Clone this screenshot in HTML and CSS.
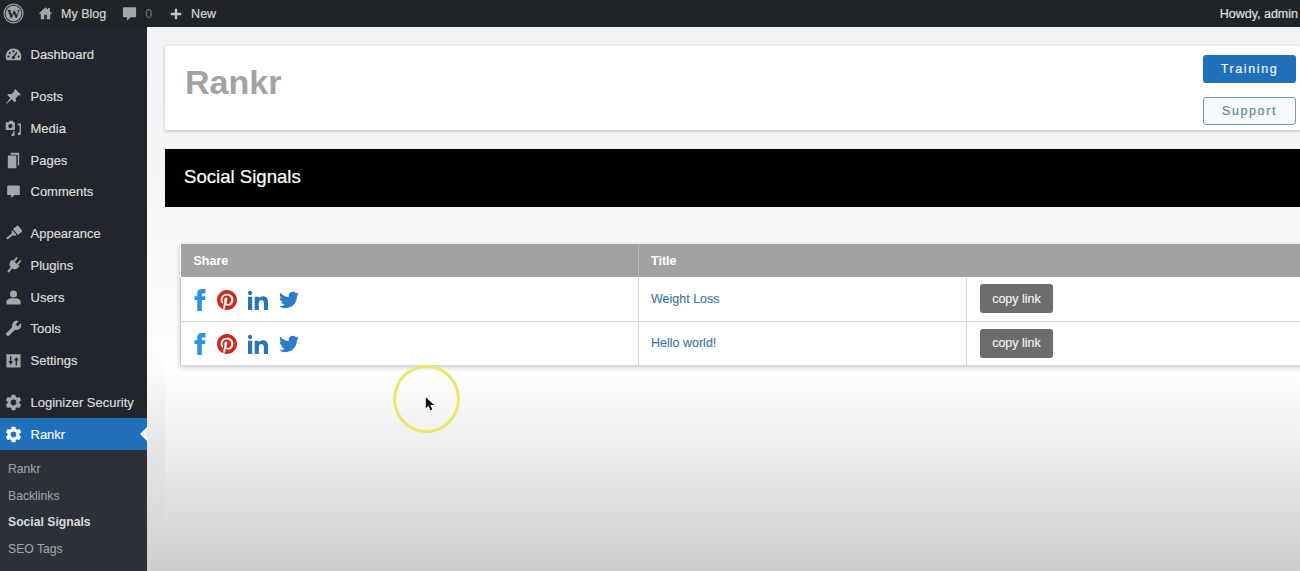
FILE: index.html
```html
<!DOCTYPE html>
<html lang="en">
<head>
<meta charset="utf-8">
<title>Rankr - Social Signals</title>
<link rel="stylesheet" href="styles.css">
</head>
<body>
<svg class="defs" aria-hidden="true">
  <symbol id="i-gear" viewBox="0 0 24 24"><path d="M19.14 12.94c.04-.3.06-.61.06-.94 0-.32-.02-.64-.07-.94l2.03-1.58a.49.49 0 00.12-.61l-1.92-3.32a.488.488 0 00-.59-.22l-2.39.96c-.5-.38-1.03-.7-1.62-.94l-.36-2.54a.484.484 0 00-.48-.41h-3.84c-.24 0-.43.17-.47.41l-.36 2.54c-.59.24-1.13.57-1.62.94l-2.39-.96c-.22-.08-.47 0-.59.22L2.74 8.87c-.12.21-.08.47.12.61l2.03 1.58c-.05.3-.09.63-.09.94s.02.64.07.94l-2.03 1.58a.49.49 0 00-.12.61l1.92 3.32c.12.22.37.29.59.22l2.39-.96c.5.38 1.03.7 1.62.94l.36 2.54c.05.24.24.41.48.41h3.84c.24 0 .44-.17.47-.41l.36-2.54c.59-.24 1.13-.56 1.62-.94l2.39.96c.22.08.47 0 .59-.22l1.92-3.32c.12-.22.07-.47-.12-.61l-2.01-1.58zM12 15.6c-1.98 0-3.6-1.62-3.6-3.6s1.62-3.6 3.6-3.6 3.6 1.62 3.6 3.6-1.62 3.6-3.6 3.6z"/></symbol>
  <symbol id="i-comment" viewBox="0 0 24 24"><path d="M3 2h18a1.5 1.5 0 011.5 1.5v13A1.5 1.5 0 0121 18h-7l-6 5v-5H3a1.5 1.5 0 01-1.5-1.5v-13A1.5 1.5 0 013 2z"/></symbol>
  <symbol id="i-fb" viewBox="0 0 24 24"><path d="M9 8H6v4h3v12h5V12h3.642L18 8h-4V6.333C14 5.378 14.192 5 15.115 5H18V0h-3.808C10.596 0 9 1.583 9 4.615V8z"/></symbol>
  <symbol id="i-pin" viewBox="0 0 24 24"><circle cx="12" cy="12" r="11.6" fill="#fff"/><path d="M12 0C5.373 0 0 5.372 0 12c0 5.084 3.163 9.426 7.627 11.174-.105-.949-.2-2.405.042-3.441.218-.937 1.407-5.965 1.407-5.965s-.359-.719-.359-1.782c0-1.668.967-2.914 2.171-2.914 1.023 0 1.518.769 1.518 1.69 0 1.029-.655 2.568-.994 3.995-.283 1.194.599 2.169 1.777 2.169 2.133 0 3.772-2.249 3.772-5.495 0-2.873-2.064-4.882-5.012-4.882-3.414 0-5.418 2.561-5.418 5.207 0 1.031.397 2.138.893 2.738a.36.36 0 01.083.345l-.333 1.36c-.053.22-.174.267-.402.161-1.499-.698-2.436-2.889-2.436-4.649 0-3.785 2.75-7.262 7.929-7.262 4.163 0 7.398 2.967 7.398 6.931 0 4.136-2.607 7.464-6.227 7.464-1.216 0-2.359-.631-2.75-1.378l-.748 2.853c-.271 1.043-1.002 2.35-1.492 3.146C9.57 23.812 10.763 24 12 24c6.627 0 12-5.373 12-12S18.627 0 12 0z"/></symbol>
  <symbol id="i-in" viewBox="0 0 24 24"><path d="M4.98 3.5C4.98 4.881 3.87 6 2.5 6S.02 4.881.02 3.5C.02 2.12 1.13 1 2.5 1s2.48 1.12 2.48 2.5zM5 8H0v16h5V8zm7.982 0H8.014v16h4.969v-8.399c0-4.67 6.029-5.052 6.029 0V24H24V13.869c0-7.88-8.922-7.593-11.018-3.714V8z"/></symbol>
  <symbol id="i-tw" viewBox="0 0 24 24"><path d="M23.953 4.57a10 10 0 01-2.825.775 4.958 4.958 0 002.163-2.723c-.951.555-2.005.959-3.127 1.184a4.92 4.92 0 00-8.384 4.482C7.69 8.095 4.067 6.13 1.64 3.162a4.822 4.822 0 00-.666 2.475c0 1.71.87 3.213 2.188 4.096a4.904 4.904 0 01-2.228-.616v.06a4.923 4.923 0 003.946 4.827 4.996 4.996 0 01-2.212.085 4.936 4.936 0 004.604 3.417 9.867 9.867 0 01-6.102 2.105c-.39 0-.779-.023-1.17-.067a13.995 13.995 0 007.557 2.209c9.053 0 13.998-7.496 13.998-13.985 0-.21 0-.42-.015-.63A9.935 9.935 0 0024 4.59z"/></symbol>
</svg>

<header class="adminbar">
  <svg class="bar-wp" viewBox="0 0 24 24"><circle cx="12" cy="12" r="10.8" fill="none" stroke="#a0a5aa" stroke-width="1.4"/><circle cx="12" cy="12" r="9" fill="#a0a5aa"/><text x="12" y="17" text-anchor="middle" class="wp-w">W</text></svg>
  <div class="bar-item bar-blog">
    <svg class="bar-icon" viewBox="0 0 24 24"><path d="M10 21v-7h4v7h5.500v-8.500H23L19 8.700V3h-3v2.800L12 2 1 12.500h3.500V21z"/></svg>
    <span>My Blog</span>
  </div>
  <div class="bar-item bar-comments">
    <svg class="bar-icon" viewBox="0 0 24 24"><use href="#i-comment"/></svg>
    <span class="bar-count">0</span>
  </div>
  <div class="bar-item bar-new">
    <svg class="bar-icon bar-plus" viewBox="0 0 24 24"><path d="M10 3h4v7h7v4h-7v7h-4v-7H3v-4h7z"/></svg>
    <span>New</span>
  </div>
  <div class="bar-howdy">Howdy, admin</div>
</header>

<div class="shell">
  <nav class="sidebar">
    <ul class="menu-group">
      <li class="menu-item"><svg class="menu-icon" viewBox="0 0 24 24"><path d="M12 3.500C5.900 3.500 1 8.400 1 14.500c0 2 .5 3.900 1.200 5.500h19.600c.7-1.600 1.200-3.500 1.200-5.500C23 8.400 18.100 3.500 12 3.500z"/><g class="gauge-marks"><circle cx="12" cy="7.500" r="1.500"/><circle cx="6.800" cy="9.800" r="1.500"/><circle cx="4.800" cy="14.800" r="1.500"/><circle cx="19.200" cy="14.800" r="1.500"/><path d="M16 8.500l1.500 1-3.800 5.600a2.200 2.200 0 11-1.800-1z"/></g></svg><span>Dashboard</span></li>
    </ul>
    <ul class="menu-group">
      <li class="menu-item"><svg class="menu-icon" viewBox="0 0 24 24"><path d="M14.500 1.500l8 8-1.800 1.200-1.200-.7-4.500 4.500.5 4-1.800 1.800-4.200-4.300L2 22.500l-.5-.5 6-7.800-4.300-4.200 1.800-1.800 4 .5 4.500-4.500-.7-1.200z"/></svg><span>Posts</span></li>
      <li class="menu-item"><svg class="menu-icon" viewBox="0 0 24 24"><path fill-rule="evenodd" d="M1 3h4l1-2h5l1 2h2v11H1zm6.500 8.500a3 3 0 100-6 3 3 0 000 6z"/><path d="M18 5h4.500v14.500a2.300 2 0 11-2-2V7.500H18zM11 16h2.500v5a2.300 2 0 11-2-2z"/></svg><span>Media</span></li>
      <li class="menu-item"><svg class="menu-icon" viewBox="0 0 24 24"><path d="M8 1h12v18h-2V4H8zM4 5h12v18H4z"/></svg><span>Pages</span></li>
      <li class="menu-item"><svg class="menu-icon small" viewBox="0 0 24 24"><use href="#i-comment"/></svg><span>Comments</span></li>
    </ul>
    <ul class="menu-group">
      <li class="menu-item"><svg class="menu-icon" viewBox="0 0 24 24"><g transform="rotate(52 12 12)"><path d="M6.500 0h11v8.500h-11zM8 10h8v3h-2l-.5 2.500v8.500h-3v-8.500L10 13H8z"/></g></svg><span>Appearance</span></li>
      <li class="menu-item"><svg class="menu-icon" viewBox="0 0 24 24"><g transform="rotate(40 12 12)"><path d="M7.500 0h2.500v7h4V0h2.500v7H19v3c0 4-2.500 6-5.500 6.500v7.500h-3v-7.500C7.500 16 5 14 5 10V7h2.500z"/></g></svg><span>Plugins</span></li>
      <li class="menu-item"><svg class="menu-icon" viewBox="0 0 24 24"><circle cx="12" cy="7" r="5"/><path d="M2 22v-4c0-3 4-5 7-5h6c3 0 7 2 7 5v4z"/></svg><span>Users</span></li>
      <li class="menu-item"><svg class="menu-icon flip" viewBox="0 0 24 24"><path d="M22.700 19l-9.100-9.100c.9-2.300.4-5-1.500-6.900-2-2-5-2.400-7.400-1.300L9 6 6 9 1.600 4.700C.4 7.100.9 10.100 2.900 12.100c1.900 1.900 4.600 2.400 6.900 1.500l9.100 9.100c.4.400 1 .4 1.400 0l2.300-2.300c.5-.4.5-1.100.1-1.400z"/></svg><span>Tools</span></li>
      <li class="menu-item"><svg class="menu-icon" viewBox="0 0 24 24"><path fill-rule="evenodd" d="M2 3h20v19H2zM7 6v7H4.500L8 18l3.500-5H9V6zm8 13v-7h-2.500L16 7l3.500 5H17v7z"/></svg><span>Settings</span></li>
    </ul>
    <ul class="menu-group menu-group-last">
      <li class="menu-item"><svg class="menu-icon large" viewBox="0 0 24 24"><use href="#i-gear"/></svg><span>Loginizer Security</span></li>
      <li class="menu-item current"><svg class="menu-icon large" viewBox="0 0 24 24"><use href="#i-gear"/></svg><span>Rankr</span></li>
    </ul>
    <ul class="submenu">
      <li>Rankr</li>
      <li>Backlinks</li>
      <li class="sub-current">Social Signals</li>
      <li>SEO Tags</li>
    </ul>
  </nav>

  <main class="content">
    <section class="brand-card">
      <h1 class="brand-title">Rankr</h1>
      <div class="brand-actions">
        <a class="btn btn-primary">Training</a>
        <a class="btn btn-outline">Support</a>
      </div>
    </section>

    <div class="section-bar">Social Signals</div>

    <table class="signals">
      <colgroup><col class="col-share"><col class="col-title"><col></colgroup>
      <thead>
        <tr><th>Share</th><th colspan="2">Title</th></tr>
      </thead>
      <tbody>
        <tr>
          <td>
            <div class="shares">
              <svg class="s-icon s-fb" viewBox="0 0 24 24"><use href="#i-fb"/></svg>
              <svg class="s-icon s-pin" viewBox="0 0 24 24"><use href="#i-pin"/></svg>
              <svg class="s-icon s-in" viewBox="0 0 24 24"><use href="#i-in"/></svg>
              <svg class="s-icon s-tw" viewBox="0 0 24 24"><use href="#i-tw"/></svg>
            </div>
          </td>
          <td><a class="post-link">Weight Loss</a></td>
          <td class="copy-cell"><button class="copy" type="button">copy link</button></td>
        </tr>
        <tr>
          <td>
            <div class="shares">
              <svg class="s-icon s-fb" viewBox="0 0 24 24"><use href="#i-fb"/></svg>
              <svg class="s-icon s-pin" viewBox="0 0 24 24"><use href="#i-pin"/></svg>
              <svg class="s-icon s-in" viewBox="0 0 24 24"><use href="#i-in"/></svg>
              <svg class="s-icon s-tw" viewBox="0 0 24 24"><use href="#i-tw"/></svg>
            </div>
          </td>
          <td><a class="post-link">Hello world!</a></td>
          <td class="copy-cell"><button class="copy" type="button">copy link</button></td>
        </tr>
      </tbody>
    </table>
  </main>
</div>

<div class="cursor-ring"></div>
<svg class="cursor-arrow" viewBox="0 0 12 18"><path d="M1 1v13l3.200-3 2.300 5.500 2.200-1-2.300-5.300H11z" fill="#111"/></svg>
</body>
</html>
```
FILE: styles.css
```css
* { box-sizing: border-box; }
html, body { margin: 0; padding: 0; }
body {
  width: 1300px;
  height: 571px;
  overflow: hidden;
  position: relative;
  font-family: "Liberation Sans", Arial, sans-serif;
  background: #fff;
}
.defs { display: none; }
ul { list-style: none; margin: 0; padding: 0; }

/* admin bar */
.adminbar {
  height: 27px;
  background: #202327;
  display: flex;
  align-items: center;
  padding-left: 3px;
  color: #d4d5d6;
  font-size: 12.500px;
  -webkit-text-stroke: 0.2px #d4d5d6;
}
.bar-wp { width: 21px; height: 21px; flex: none; margin-top: -1px; }
.wp-w { font-family: "Liberation Serif", serif; font-size: 15px; font-weight: 700; fill: #202327; stroke: none; }
.bar-item { display: flex; align-items: center; }
.bar-icon { width: 15px; height: 15px; fill: #a4a7aa; flex: none; stroke: none; }
.bar-plus { width: 14px; height: 14px; fill: #c4c6c8; }
.bar-blog { margin-left: 14px; gap: 8px; }
.bar-comments { margin-left: 16px; gap: 8px; }
.bar-count { color: #777a7d; -webkit-text-stroke: 0; }
.bar-new { margin-left: 17px; gap: 8px; }
.bar-howdy { margin-left: auto; color: #e4e4e4; margin-right: 2px; }

/* layout */
.shell { display: flex; height: 544px; }
.sidebar {
  width: 147px;
  flex: none;
  background: #22262c;
  padding-top: 12px;
  color: #d9dbdd;
  font-size: 13px;
  -webkit-text-stroke: 0.2px #d9dbdd;
}
.menu-group { margin-bottom: 10.300px; }
.menu-group-last { margin-bottom: 0; }
.menu-item {
  height: 31.700px;
  display: flex;
  align-items: center;
  padding-left: 5px;
  position: relative;
}
.menu-item span { margin-left: 8.500px; }
.menu-icon { width: 17px; height: 17px; fill: #a3a6aa; flex: none; stroke: none; }
.menu-icon.large { transform: scale(1.15); }
.menu-icon.small { transform: scale(.85); }
.menu-icon.flip { transform: scaleX(-1); }
.gauge-marks { fill: #22262c; }
.current { background: #2170ba; color: #fff; }
.current .menu-icon { fill: #fff; }
.current::after {
  content: "";
  position: absolute;
  right: 0;
  top: 50%;
  margin-top: -7px;
  border: 7px solid transparent;
  border-right-color: #f1f2f3;
  border-left-width: 0;
}
.submenu {
  background: #2c3138;
  padding: 6px 0 0 8px;
  height: 125px;
  font-size: 12.200px;
  color: #9fa3a7;
  -webkit-text-stroke: 0.1px #9fa3a7;
}
.submenu li { height: 26.500px; line-height: 26.500px; }
.sub-current { font-weight: 700; color: #d9dbdd; -webkit-text-stroke: 0; }

/* content */
.content {
  flex: 1;
  min-width: 0;
  padding: 19px 0 0 18px;
  background:
    linear-gradient(rgba(200,200,208,0) 320px, rgba(200,200,208,.22) 420px, rgba(200,200,208,0) 544px) no-repeat 0 0 / 18px 100%,
    linear-gradient(#f1f2f3 0, #f7f7f8 190px, #fefefe 345px, #e9e9e9 440px, #cdcdcd 544px);
  overflow: hidden;
}
.brand-card {
  height: 84px;
  background: #fff;
  box-shadow: 0 1px 3px rgba(0,0,0,.25);
  display: flex;
  justify-content: space-between;
  padding: 9px 4px 0 20px;
}
.brand-title {
  margin: 7px 0 0;
  font-size: 34px;
  line-height: 40px;
  font-weight: 700;
  color: #a3a3a3;
}
.brand-actions { display: flex; flex-direction: column; gap: 14px; }
.btn {
  display: flex;
  align-items: center;
  justify-content: center;
  width: 93px;
  height: 28px;
  border-radius: 3px;
  font-size: 12.500px;
  letter-spacing: 1.600px;
}
.btn-primary { background: #2170ba; color: #eef4fa; -webkit-text-stroke: 0.2px #eef4fa; }
.btn-outline { background: #f8f9fa; border: 1px solid #6c9ab8; color: #5b87a8; -webkit-text-stroke: 0.2px #5b87a8; }

.section-bar {
  margin-top: 19px;
  height: 58px;
  background: #000;
  color: #fff;
  font-size: 18.600px;
  line-height: 56px;
  padding-left: 19px;
  -webkit-text-stroke: 0.2px #fff;
}

.signals {
  margin: 37px 0 0 15px;
  width: 1200px;
  table-layout: fixed;
  border-collapse: collapse;
  background: #fff;
  box-shadow: 0 2px 5px rgba(0,0,0,.22);
  font-size: 12.500px;
}
.col-share { width: 458px; }
.col-title { width: 328px; }
.signals th {
  height: 33px;
  background: #a1a2a2;
  color: #fff;
  text-align: left;
  font-size: 12.500px;
  padding: 0 0 0 12px;
  border-left: 1px solid #b9baba;
}
.signals th:first-child { border-left: 0; padding-left: 13px; }
.signals td {
  height: 44px;
  padding: 0 0 0 12px;
  border-top: 1px solid #d6d6d6;
  border-left: 1px solid #d6d6d6;
  vertical-align: middle;
}
.signals tr:first-child td { border-top: 0; }
.signals td:first-child { border-left: 1px solid #c9c9c9; padding-left: 13px; }
.signals .copy-cell { padding-left: 13px; }
.post-link { color: #3f76a8; font-size: 12.500px; -webkit-text-stroke: 0.15px #3f76a8; }
.shares { display: flex; align-items: center; padding-top: 2px; margin-left: -5px; }
.s-icon { display: block; flex: none; }
.s-fb { width: 22px; height: 22px; fill: #2c93e0; margin-right: 6px; }
.s-pin { width: 20px; height: 20px; fill: #d0281c; margin-right: 11px; }
.s-in { width: 20px; height: 20px; fill: #2a74b4; margin-right: 11px; }
.s-tw { width: 20px; height: 20px; fill: #2c7cc8; }
.copy {
  display: block;
  width: 73px;
  height: 29px;
  padding: 0;
  border: 0;
  border-radius: 3px;
  background: #6e6c6b;
  color: #f4f4f4;
  font: 12.500px "Liberation Sans", Arial, sans-serif;
  -webkit-text-stroke: 0.15px #f4f4f4;
}

/* recording cursor overlay */
.cursor-ring {
  position: absolute;
  left: 393px;
  top: 365px;
  width: 67px;
  height: 68px;
  border: 3px solid #e8e866;
  border-radius: 50%;
}
.cursor-arrow {
  position: absolute;
  left: 425px;
  top: 396px;
  width: 10px;
  height: 16px;
}
```
